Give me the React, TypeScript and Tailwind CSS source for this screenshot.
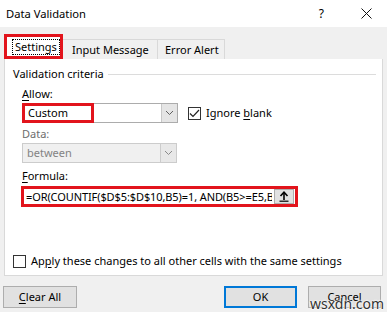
import React from "react";

const font = { fontFamily: '"Noto Sans", "Open Sans", sans-serif' };

function Chevron({ color = "#606060" }: { color?: string }) {
  return (
    <svg width="9" height="6" viewBox="0 0 9 6">
      <path d="M1 1 L4.5 4.5 L8 1" fill="none" stroke={color} strokeWidth="1" />
    </svg>
  );
}

export default function App() {
  return (
    <div
      className="relative flex h-[312px] w-[387px] flex-col overflow-hidden bg-[#f0f0f0] text-[11px] leading-[16px] text-black"
      style={font}
    >
      {/* title bar */}
      <div className="flex h-[27px] items-center bg-white pl-[6px]">
        <span className="text-[11.2px]">Data Validation</span>
        <span className="ml-auto mr-[37px] text-[12px]">?</span>
        <svg className="mr-[15px]" width="11" height="11" viewBox="0 0 11 11">
          <path d="M0.5 0.5 L10.5 10.5 M10.5 0.5 L0.5 10.5" stroke="#111" strokeWidth="1" />
        </svg>
      </div>

      {/* tabs */}
      <div className="mt-[7px] flex items-end pl-[4px]">
        <div className="flex h-[25px] w-[59px] items-center border-[3px] border-[#e2141c] bg-white pl-[5px]">
          <span className="border border-dotted border-black px-[2px] leading-[14px]">Settings</span>
        </div>
        <div className="flex h-[20px] w-[95px] items-center border border-b-0 border-l-0 border-[#d9d9d9] pl-[9px]">
          Input Message
        </div>
        <div className="flex h-[20px] w-[67px] items-center border border-b-0 border-l-0 border-[#d9d9d9] pl-[7px]">
          Error Alert
        </div>
      </div>

      {/* pane */}
      <div className="mx-[4px] flex h-[217px] flex-col border border-t-0 border-[#d9d9d9] bg-white pl-[7px] pt-[7px]">
        <div className="flex items-center pr-[6px]">
          <span className="pl-[1px]">Validation criteria</span>
          <div className="ml-[4px] h-px flex-1 bg-[#dcdcdc]" />
        </div>

        <div className="pl-[10px]">
          <div className="mt-[4px]">
            <span className="underline underline-offset-2">A</span>llow:
          </div>
          <div className="mt-[1px] flex items-center">
            <div className="flex h-[20px] w-[156px] border border-[#acacac]">
              <div className="flex flex-1 items-center">
                <div className="-m-px flex h-[20px] w-[72px] items-center border-[3px] border-[#e2141c] pl-[3px]">
                  Custom
                </div>
              </div>
              <div className="flex w-[16px] items-center justify-center border-l border-[#c8c8c8] bg-[#e5e5e5]">
                <Chevron />
              </div>
            </div>
            <div className="ml-[10px] flex items-center">
              <div className="flex h-[13px] w-[13px] items-center justify-center border border-[#333] bg-white">
                <svg width="11" height="9" viewBox="0 0 11 9">
                  <path d="M1 4.5 L4 7.5 L10 1" fill="none" stroke="#222" strokeWidth="1.2" />
                </svg>
              </div>
              <span className="ml-[5px]">
                Ignore <span className="underline underline-offset-2">b</span>lank
              </span>
            </div>
          </div>

          <div className="mt-[3px] text-[#6d6d6d]">Data:</div>
          <div className="mt-[1px] flex h-[20px] w-[155px] border border-[#cccccc] bg-[#f0f0f0]">
            <div className="flex flex-1 items-center pl-[4px] text-[#838383]">between</div>
            <div className="flex w-[16px] items-center justify-center border-l border-[#cccccc] bg-[#e8e8e8]">
              <Chevron color="#8a8a8a" />
            </div>
          </div>

          <div className="mt-[5px]">
            <span className="underline underline-offset-2">F</span>ormula:
          </div>
          <div className="-ml-[1px] mt-[2px] flex h-[21px] w-[277px] items-center border-[3px] border-[#e2141c] bg-white pl-[2px] pr-[1px]">
            <div className="flex-1 overflow-hidden whitespace-nowrap tracking-[-0.1px]">
              =OR(COUNTIF($D$5:$D$10,B5)=1, AND(B5&gt;=E5,B5&lt;=F5))
            </div>
            <div className="ml-[2px] flex h-[15px] w-[20px] items-center justify-center border border-[#adadad] bg-[#e1e1e1]">
              <svg width="10" height="11" viewBox="0 0 10 11">
                <path d="M5 9 L5 2" stroke="#000" strokeWidth="1.6" />
                <path d="M1.5 5 L5 1.2 L8.5 5" fill="none" stroke="#000" strokeWidth="1.6" />
                <path d="M0.5 10.2 L9.5 10.2" stroke="#000" strokeWidth="1.2" />
              </svg>
            </div>
          </div>
        </div>

        <div className="mt-[46px] flex items-center pl-[1px]">
          <div className="h-[13px] w-[13px] border border-[#333] bg-white" />
          <span className="ml-[5px]">
            Ap<span className="underline underline-offset-2">p</span>ly these changes to all other cells with the same settings
          </span>
        </div>
      </div>

      {/* buttons */}
      <div className="mt-[10px] flex pl-[3px]">
        <div className="flex h-[22px] w-[74px] items-center justify-center border border-[#adadad] bg-[#e1e1e1]">
          <span>
            <span className="underline underline-offset-2">C</span>lear All
          </span>
        </div>
        <div className="ml-[147px] flex h-[22px] w-[73px] items-center justify-center border-2 border-[#0078d7] bg-[#e1e1e1]">
          OK
        </div>
        <div className="relative ml-[11px] flex h-[22px] w-[73px] items-center justify-center border border-[#adadad] bg-[#e1e1e1]">
          Cancel
          <span
            className="absolute left-[1px] top-[9px] text-[14px] leading-[16px] text-[#333]"
            style={{ textShadow: "0 0 2px #fff, 0 0 2px #fff, 0 0 2px #fff" }}
          >
            wsxdn.com
          </span>
        </div>
      </div>
    </div>
  );
}
